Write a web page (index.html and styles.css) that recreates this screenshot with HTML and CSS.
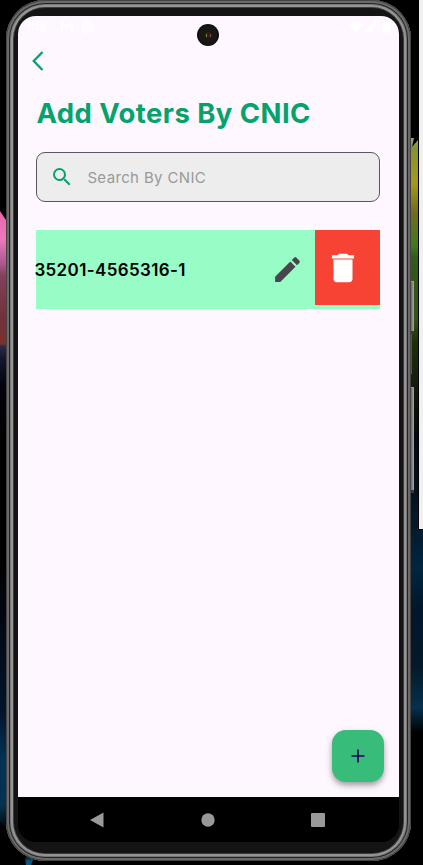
FILE: index.html
```
<!DOCTYPE html>
<html lang="en">
<head>
<meta charset="utf-8">
<meta name="viewport" content="width=device-width, initial-scale=1">
<title>Add Voters By CNIC</title>
<link rel="stylesheet" href="styles.css">
</head>
<body>
<div class="desktop">
  <div class="wall wall-left"></div>
  <div class="wall wall-right"></div>
  <div class="side-window"></div>
  <div class="side-key power"></div>
  <div class="side-rail"></div>
  <div class="side-key volume"></div>
  <div class="phone">
    <div class="camera"><i></i><i></i></div>
    <div class="screen">
      <main class="app">
        <div class="status">
          <span class="time">1:18</span>
          <svg class="mail" width="14" height="12" viewBox="0 0 14 12"><path d="M2 10V2l5 4 5-4v8" fill="none" stroke="#fff" stroke-width="2"/></svg>
          <svg class="sync" width="13" height="13" viewBox="0 0 13 13"><circle cx="6.5" cy="6.500" r="5.300" fill="none" stroke="#fff" stroke-width="1.600"/><path d="M4 4l5 5M4 7a2.500 2.500 0 0 0 3 2M6 4a2.500 2.500 0 0 1 3 3" fill="none" stroke="#fff" stroke-width="1.300"/></svg>
          <svg class="signals" width="42" height="13" viewBox="0 0 42 13"><path d="M0 3.500Q7 -2 14 3.500L7 11.500zM15 11.500L27 0v5h-3v6.500zM34 1.500h2V0h3v1.500h2v10h-7z" fill="#fff"/></svg>
        </div>
        <button class="back" aria-label="Back">
          <svg width="12" height="20" viewBox="0 0 12 20"><path d="M10.500 1L1.700 10l8.800 9" fill="none" stroke="#05a26c" stroke-width="2.300"/></svg>
        </button>
        <h1>Add Voters By CNIC</h1>
        <div class="search">
          <svg width="24" height="24" viewBox="0 0 24 24"><path fill="#05a26c" d="M15.500 14h-.79l-.28-.27A6.471 6.471 0 0 0 16 9.500 6.500 6.500 0 1 0 9.500 16c1.610 0 3.090-.59 4.230-1.570l.27.28v.79l5 4.990L20.490 19l-4.990-5zm-6 0C7.010 14 5 11.990 5 9.500S7.010 5 9.500 5 14 7.010 14 9.500 11.990 14 9.500 14z"/></svg>
          <span>Search By CNIC</span>
        </div>
        <div class="voter">
          <span class="cnic">35201-4565316-1</span>
          <svg class="edit" width="33" height="33" viewBox="0 0 24 24"><path fill="#49454f" d="M3 17.250V21h3.750L17.810 9.940l-3.750-3.750L3 17.250zM20.710 7.040a1 1 0 0 0 0-1.410l-2.340-2.340a1 1 0 0 0-1.410 0l-1.830 1.830 3.750 3.750 1.830-1.830z"/></svg>
          <button class="delete" aria-label="Delete">
            <svg width="38" height="38" viewBox="0 0 24 24"><path fill="#fff" d="M6 19c0 1.100.9 2 2 2h8c1.100 0 2-.9 2-2V7H6v12zM19 4h-3.500l-1-1h-5l-1 1H5v2h14V4z"/><path d="M6 6.500h12" stroke="#fba59d" stroke-width="1"/></svg>
          </button>
        </div>
        <button class="fab" aria-label="Add"><svg width="14" height="14" viewBox="0 0 14 14"><path d="M7 .5v13M.5 7h13" stroke="#21005d" stroke-width="1.700"/></svg></button>
      </main>
      <nav class="nav">
        <svg width="14" height="16" viewBox="0 0 14 16"><path d="M0 8L13.500.5v15z" fill="#999"/></svg>
        <svg width="14" height="14" viewBox="0 0 14 14"><circle cx="7" cy="7" r="6.700" fill="#999"/></svg>
        <svg width="14" height="14" viewBox="0 0 14 14"><rect width="14" height="14" rx="1" fill="#999"/></svg>
      </nav>
    </div>
  </div>
</div>
</body>
</html>
```
FILE: styles.css
```
* { box-sizing: border-box; }
body { margin: 0; background: #000; font-family: Inter, "Liberation Sans", sans-serif; font-optical-sizing: none; }
button { border: 0; padding: 0; background: none; }
svg { display: block; flex: none; }
.desktop { position: relative; width: 423px; height: 865px; overflow: hidden; background: #000; padding-left: 6px; }

/* scenery visible around the device */
.wall { position: absolute; }
.wall-left {
  left: 0; top: 211px; width: 34px; height: 654px;
  background: linear-gradient(180deg, #e765aa 0, #ee7abb 28px, #ac5a91 52px, #853f5b 65px, #71323c 105px, #7c302c 133px, #2b2a4a 135px, #12162c 148px, #03040c 175px, #000 240px, #000 345px, #020b18 430px, #02142a 500px, #033354 550px, #04324f 595px, #000 620px, #000 645px, #07577f 650px);
  clip-path: polygon(0 0, 6px 9px, 6px 620px, 26px 640px, 34px 647px, 31px 654px, 26px 654px, 25px 645px, 0 610px);
}
.wall-right {
  right: 0; top: 138px; width: 16px; height: 595px;
  background: linear-gradient(180deg, #86a782 0, #85932c 10px, #a59a18 45px, #716d19 75px, #3f7a1d 108px, #315c17 120px, #34530f 180px, #1b3007 205px, #142008 240px, #081109 275px, #020914 300px, #03111f 350px, #03253f 430px, #02172a 470px, #041a2b 530px, #06304e 570px, #000 595px);
  clip-path: polygon(0 0, 7px 0, 5px 9px, 11px 2px, 11px 391px, 16px 391px, 16px 100%, 0 100%);
}
.side-window { position: absolute; right: 0; top: 0; width: 5px; height: 530px; background: #f0f0f0; border-left: 1px solid #000; border-bottom: 1px solid #000; }
.side-key { position: absolute; left: 409px; width: 5px; background: linear-gradient(90deg, #444, #7c7c7c 60%, #aaa); border-top: 1px solid #999; border-bottom: 3px solid #383838; }
.power { top: 281px; height: 53px; }
.side-rail { position: absolute; left: 410px; top: 334px; width: 2px; height: 40px; background: #555; }
.volume { top: 387px; height: 106px; }

.phone {
  position: relative; width: 405px; height: 861px; padding: 16px 12px 19px; border-radius: 39px; background: #141414;
  box-shadow: inset 0 0 0 1px #454343, inset 0 0 0 3px #6c6969, inset 0 0 0 4px #242424, inset 0 0 0 5px #777, inset 0 0 0 7px #949494, inset 0 0 0 8px #3c3c3c;
}
.screen { height: 826px; border-radius: 18px; overflow: hidden; background: #000; }
.app { position: relative; height: 781px; padding: 0 19px 0 18.4px; background: #fef7ff; }
.status { display: flex; height: 22px; padding-top: 5px; margin: 0 -11px 0 -10px; color: #fff; }
.time { width: 34px; font-size: 11px; line-height: 13px; font-weight: 600; }
.sync { margin-left: 7px; }
.signals { margin-left: auto; }
.camera { position: absolute; left: 191px; top: 24px; z-index: 2; width: 22px; height: 22px; border-radius: 50%; background: radial-gradient(circle, #202020 0 20%, #171717 25% 55%, #111 60%); display: flex; justify-content: center; align-items: center; gap: 3px; }
.camera i { width: 1px; height: 3px; background: #80802d; }
.camera i + i { background: #a34a22; }
.back { display: block; margin: 13px 0 0 -4px; }
h1 { margin: 24px 0 0; height: 36px; color: #05a26c; font-size: 27.5px; line-height: 36px; font-weight: 700; letter-spacing: .43px; white-space: nowrap; }
.search { display: flex; align-items: center; width: 344px; height: 50px; margin-top: 21px; padding-left: 13px; border: 1px solid #5c5663; border-radius: 9px; background: #ededed; color: #999; font-size: 15px; letter-spacing: .36px; }
.search span { margin-left: 13px; }
.voter { display: flex; align-items: center; width: 344px; height: 79px; margin-top: 28px; background: #98fcc7; }
.cnic { margin-left: -2px; color: #000; font-size: 17px; font-weight: 600; letter-spacing: .36px; white-space: nowrap; }
.edit { margin: 0 11px 0 auto; }
.delete { align-self: flex-start; width: 65px; height: 75px; background: #f64334; padding-left: 9px; }
.fab { position: absolute; right: 15px; bottom: 15px; width: 52px; height: 52px; display: grid; place-items: center; border-radius: 14px; background: #38bc79; box-shadow: 0 3px 5px #0004, 0 4px 8px #0002; }
.nav { height: 45px; background: #000; display: flex; align-items: center; justify-content: space-between; padding: 0 74px 0 72px; }
```
